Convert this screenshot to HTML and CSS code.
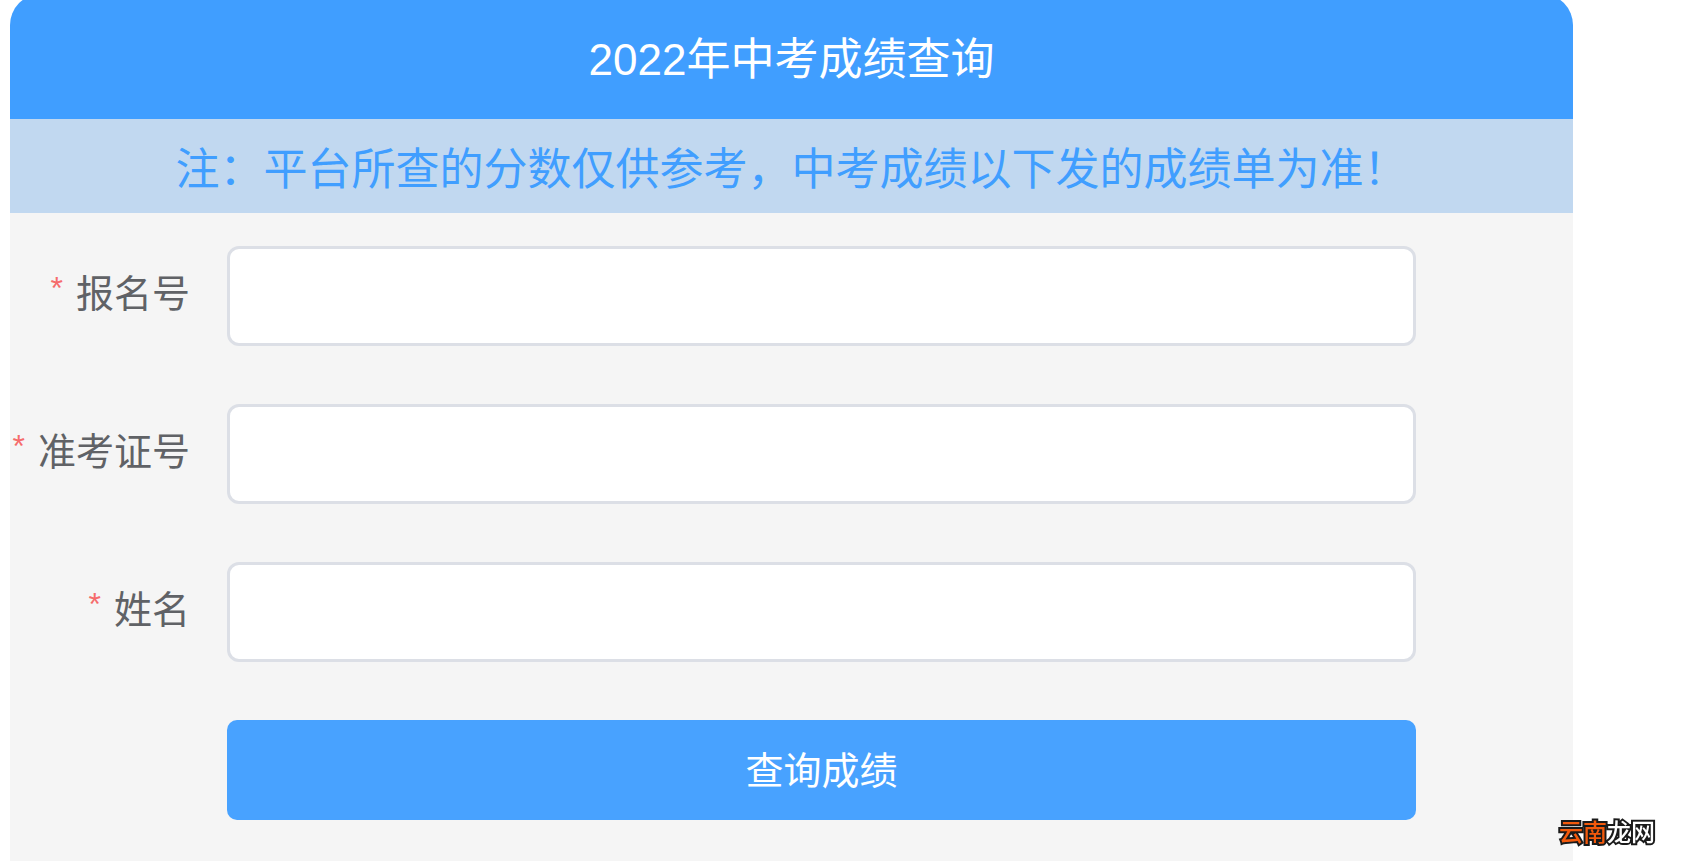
FILE: index.html
```html
<!DOCTYPE html>
<html lang="zh-CN">
<head>
    <meta charset="UTF-8">
    <meta name="viewport" content="width=device-width, initial-scale=1.0">
    <title>2022年中考成绩查询</title>
    <link rel="stylesheet" href="styles.css">
</head>
<body>
    <div class="card">
        <h1 class="card-title">2022年中考成绩查询</h1>
        <p class="notice">注：平台所查的分数仅供参考，中考成绩以下发的成绩单为准！</p>

        <form class="query-form">
            <div class="form-item">
                <label for="reg_no">报名号</label>
                <input type="text" id="reg_no" required>
            </div>

            <div class="form-item">
                <label for="exam_no">准考证号</label>
                <input type="text" id="exam_no" required>
            </div>

            <div class="form-item">
                <label for="user_name">姓名</label>
                <input type="text" id="user_name" required>
            </div>

            <div class="form-item">
                <button type="submit">查询成绩</button>
            </div>
        </form>
    </div>

    <div class="watermark"><span>云南</span>龙网</div>
</body>
</html>
```

FILE: styles.css
```css
:root {
    --primary: #409eff;
    --primary-light: #48a2ff;
    --notice-bg: #c1d8f0;
    --card-bg: #f5f5f5;
    --border: #dcdfe6;
    --text: #606266;
    --danger: #f56c6c;
}

* {
    box-sizing: border-box;
}

body {
    margin: 0;
    background: #fff;
    color: var(--text);
    font-family: "Liberation Sans", "Noto Sans CJK SC", sans-serif;
    overflow-x: hidden;
}

.card {
    display: flow-root;
    min-height: 100vh;
    margin: 0 119px 0 10px;
    background: linear-gradient(#fff 40px, var(--card-bg) 40px);
}

/* 顶部圆角略微超出窗口 */
.card-title {
    margin: -6px 0 0;
    padding: 36px 0 29px;
    border-radius: 31px 31px 0 0;
    background-color: var(--primary);
    color: #fff;
    font-size: 44px;
    font-weight: 400;
    line-height: 60px;
    text-align: center;
}

.notice {
    margin: 0;
    padding: 21px 0 13px;
    background-color: var(--notice-bg);
    color: var(--primary);
    font-size: 44px;
    line-height: 60px;
    text-align: center;
}

.query-form {
    display: flex;
    flex-direction: column;
    gap: 58px;
    padding: 33px 157px 40px 0;
}

.form-item {
    display: grid;
    grid-template-columns: 180px 1fr;
    column-gap: 37px;
    align-items: center;
}

label {
    padding-bottom: 4px;
    font-size: 38px;
    line-height: 60px;
    text-align: right;
    white-space: nowrap;
}

label::before {
    content: "*";
    margin-right: 13px;
    color: var(--danger);
    font-size: 32px;
    line-height: 1;
    vertical-align: 8px;
}

input {
    width: 100%;
    height: 100px;
    padding: 0 36px;
    border: 3px solid var(--border);
    border-radius: 12px;
    background-color: #fff;
    color: var(--text);
    font: inherit;
    font-size: 38px;
}

input:focus {
    outline: none;
    border-color: var(--primary);
}

button {
    grid-column: 2;
    height: 100px;
    padding: 0 0 6px;
    border: none;
    border-radius: 10px;
    background-color: var(--primary-light);
    color: #fff;
    font: inherit;
    font-size: 38px;
    cursor: pointer;
}

button:hover {
    background-color: var(--primary);
}

.watermark {
    position: fixed;
    right: 37px;
    bottom: 13px;
    color: #fff;
    font-size: 24px;
    font-weight: 500;
    line-height: 30px;
    -webkit-text-stroke: 4px #1a1a1a;
    paint-order: stroke fill;
}

.watermark span {
    color: #f2590c;
}
```
